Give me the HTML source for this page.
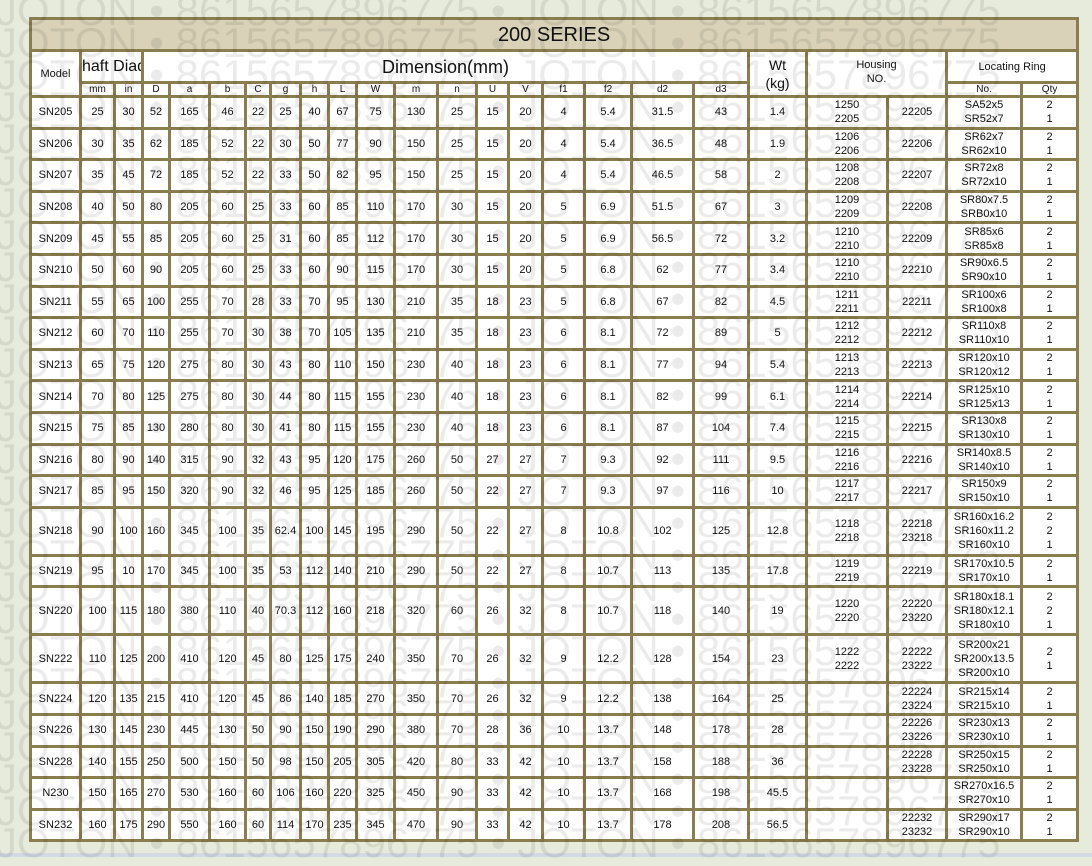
<!DOCTYPE html>
<html><head><meta charset="utf-8"><style>
html,body{margin:0;padding:0;}
body{width:1092px;height:857px;background:#e7ebdb;position:relative;overflow:hidden;font-family:"Liberation Sans",sans-serif;}
.bot{position:absolute;left:0;top:853px;width:1092px;height:4px;background:#d3dae6;}
table{position:absolute;left:29px;top:17px;width:1049px;border-collapse:collapse;table-layout:fixed;background:#fff;}
td{border:3px solid #8a7d4e;text-align:center;font-size:11px;color:#111;padding:0;line-height:14px;overflow:hidden;white-space:nowrap;}
td.t{background:#d9d2b9;font-size:20px;color:#111;height:29px;line-height:20px;}
.h1 td{height:29px;}
.big{font-size:18px;}
.sm{font-size:10px;line-height:11px;}
.r td{height:28.6px;}
.r3 td{height:45px;}
.wm{position:absolute;left:0;top:0;width:1092px;height:857px;pointer-events:none;z-index:5;}
.wm div{position:absolute;left:-4px;white-space:nowrap;font-size:42px;color:rgba(0,0,0,0.08);letter-spacing:0px;line-height:42px;}
</style></head><body>
<table>
<colgroup>
<col style="width:50px"><col style="width:34px"><col style="width:28px"><col style="width:27px"><col style="width:40px"><col style="width:36px"><col style="width:25px"><col style="width:30px"><col style="width:28px"><col style="width:28px"><col style="width:38px"><col style="width:43px"><col style="width:39px"><col style="width:32px"><col style="width:34px"><col style="width:42px"><col style="width:47px"><col style="width:62px"><col style="width:55px"><col style="width:58px"><col style="width:81px"><col style="width:59px"><col style="width:75px"><col style="width:56px">
</colgroup>
<tr><td class="t" colspan="24">200 SERIES</td></tr>
<tr class="h1"><td rowspan="2" style="font-size:11px">Model</td><td colspan="2" style="text-align:left;font-size:16px;line-height:18px">&#8203;haft Diad</td><td colspan="16" class="big">Dimension(mm)</td><td rowspan="2" style="font-size:14px;line-height:18px">Wt<br>(kg)</td><td colspan="2" rowspan="2" style="vertical-align:top;padding-top:6px;font-size:11px">Housing<br>NO.</td><td colspan="2" style="font-size:11px">Locating Ring</td></tr>
<tr style="height:12px"><td class="sm">mm</td><td class="sm">in</td><td class="sm">D</td><td class="sm">a</td><td class="sm">b</td><td class="sm">C</td><td class="sm">g</td><td class="sm">h</td><td class="sm">L</td><td class="sm">W</td><td class="sm">m</td><td class="sm">n</td><td class="sm">U</td><td class="sm">V</td><td class="sm">f1</td><td class="sm">f2</td><td class="sm">d2</td><td class="sm">d3</td><td class="sm">No.</td><td class="sm">Qty</td></tr>
<tr class="r"><td>SN205</td><td>25</td><td>30</td><td>52</td><td>165</td><td>46</td><td>22</td><td>25</td><td>40</td><td>67</td><td>75</td><td>130</td><td>25</td><td>15</td><td>20</td><td>4</td><td>5.4</td><td>31.5</td><td>43</td><td>1.4</td><td>1250<br>2205</td><td>22205</td><td>SA52x5<br>SR52x7</td><td>2<br>1</td></tr>
<tr class="r"><td>SN206</td><td>30</td><td>35</td><td>62</td><td>185</td><td>52</td><td>22</td><td>30</td><td>50</td><td>77</td><td>90</td><td>150</td><td>25</td><td>15</td><td>20</td><td>4</td><td>5.4</td><td>36.5</td><td>48</td><td>1.9</td><td>1206<br>2206</td><td>22206</td><td>SR62x7<br>SR62x10</td><td>2<br>1</td></tr>
<tr class="r"><td>SN207</td><td>35</td><td>45</td><td>72</td><td>185</td><td>52</td><td>22</td><td>33</td><td>50</td><td>82</td><td>95</td><td>150</td><td>25</td><td>15</td><td>20</td><td>4</td><td>5.4</td><td>46.5</td><td>58</td><td>2</td><td>1208<br>2208</td><td>22207</td><td>SR72x8<br>SR72x10</td><td>2<br>1</td></tr>
<tr class="r"><td>SN208</td><td>40</td><td>50</td><td>80</td><td>205</td><td>60</td><td>25</td><td>33</td><td>60</td><td>85</td><td>110</td><td>170</td><td>30</td><td>15</td><td>20</td><td>5</td><td>6.9</td><td>51.5</td><td>67</td><td>3</td><td>1209<br>2209</td><td>22208</td><td>SR80x7.5<br>SRB0x10</td><td>2<br>1</td></tr>
<tr class="r"><td>SN209</td><td>45</td><td>55</td><td>85</td><td>205</td><td>60</td><td>25</td><td>31</td><td>60</td><td>85</td><td>112</td><td>170</td><td>30</td><td>15</td><td>20</td><td>5</td><td>6.9</td><td>56.5</td><td>72</td><td>3.2</td><td>1210<br>2210</td><td>22209</td><td>SR85x6<br>SR85x8</td><td>2<br>1</td></tr>
<tr class="r"><td>SN210</td><td>50</td><td>60</td><td>90</td><td>205</td><td>60</td><td>25</td><td>33</td><td>60</td><td>90</td><td>115</td><td>170</td><td>30</td><td>15</td><td>20</td><td>5</td><td>6.8</td><td>62</td><td>77</td><td>3.4</td><td>1210<br>2210</td><td>22210</td><td>SR90x6.5<br>SR90x10</td><td>2<br>1</td></tr>
<tr class="r"><td>SN211</td><td>55</td><td>65</td><td>100</td><td>255</td><td>70</td><td>28</td><td>33</td><td>70</td><td>95</td><td>130</td><td>210</td><td>35</td><td>18</td><td>23</td><td>5</td><td>6.8</td><td>67</td><td>82</td><td>4.5</td><td>1211<br>2211</td><td>22211</td><td>SR100x6<br>SR100x8</td><td>2<br>1</td></tr>
<tr class="r"><td>SN212</td><td>60</td><td>70</td><td>110</td><td>255</td><td>70</td><td>30</td><td>38</td><td>70</td><td>105</td><td>135</td><td>210</td><td>35</td><td>18</td><td>23</td><td>6</td><td>8.1</td><td>72</td><td>89</td><td>5</td><td>1212<br>2212</td><td>22212</td><td>SR110x8<br>SR110x10</td><td>2<br>1</td></tr>
<tr class="r"><td>SN213</td><td>65</td><td>75</td><td>120</td><td>275</td><td>80</td><td>30</td><td>43</td><td>80</td><td>110</td><td>150</td><td>230</td><td>40</td><td>18</td><td>23</td><td>6</td><td>8.1</td><td>77</td><td>94</td><td>5.4</td><td>1213<br>2213</td><td>22213</td><td>SR120x10<br>SR120x12</td><td>2<br>1</td></tr>
<tr class="r"><td>SN214</td><td>70</td><td>80</td><td>125</td><td>275</td><td>80</td><td>30</td><td>44</td><td>80</td><td>115</td><td>155</td><td>230</td><td>40</td><td>18</td><td>23</td><td>6</td><td>8.1</td><td>82</td><td>99</td><td>6.1</td><td>1214<br>2214</td><td>22214</td><td>SR125x10<br>SR125x13</td><td>2<br>1</td></tr>
<tr class="r"><td>SN215</td><td>75</td><td>85</td><td>130</td><td>280</td><td>80</td><td>30</td><td>41</td><td>80</td><td>115</td><td>155</td><td>230</td><td>40</td><td>18</td><td>23</td><td>6</td><td>8.1</td><td>87</td><td>104</td><td>7.4</td><td>1215<br>2215</td><td>22215</td><td>SR130x8<br>SR130x10</td><td>2<br>1</td></tr>
<tr class="r"><td>SN216</td><td>80</td><td>90</td><td>140</td><td>315</td><td>90</td><td>32</td><td>43</td><td>95</td><td>120</td><td>175</td><td>260</td><td>50</td><td>27</td><td>27</td><td>7</td><td>9.3</td><td>92</td><td>111</td><td>9.5</td><td>1216<br>2216</td><td>22216</td><td>SR140x8.5<br>SR140x10</td><td>2<br>1</td></tr>
<tr class="r"><td>SN217</td><td>85</td><td>95</td><td>150</td><td>320</td><td>90</td><td>32</td><td>46</td><td>95</td><td>125</td><td>185</td><td>260</td><td>50</td><td>22</td><td>27</td><td>7</td><td>9.3</td><td>97</td><td>116</td><td>10</td><td>1217<br>2217</td><td>22217</td><td>SR150x9<br>SR150x10</td><td>2<br>1</td></tr>
<tr class="r3"><td>SN218</td><td>90</td><td>100</td><td>160</td><td>345</td><td>100</td><td>35</td><td>62.4</td><td>100</td><td>145</td><td>195</td><td>290</td><td>50</td><td>22</td><td>27</td><td>8</td><td>10.8</td><td>102</td><td>125</td><td>12.8</td><td>1218<br>2218</td><td>22218<br>23218</td><td>SR160x16.2<br>SR160x11.2<br>SR160x10</td><td>2<br>2<br>1</td></tr>
<tr class="r"><td>SN219</td><td>95</td><td>10</td><td>170</td><td>345</td><td>100</td><td>35</td><td>53</td><td>112</td><td>140</td><td>210</td><td>290</td><td>50</td><td>22</td><td>27</td><td>8</td><td>10.7</td><td>113</td><td>135</td><td>17.8</td><td>1219<br>2219</td><td>22219</td><td>SR170x10.5<br>SR170x10</td><td>2<br>1</td></tr>
<tr class="r3"><td>SN220</td><td>100</td><td>115</td><td>180</td><td>380</td><td>110</td><td>40</td><td>70.3</td><td>112</td><td>160</td><td>218</td><td>320</td><td>60</td><td>26</td><td>32</td><td>8</td><td>10.7</td><td>118</td><td>140</td><td>19</td><td>1220<br>2220</td><td>22220<br>23220</td><td>SR180x18.1<br>SR180x12.1<br>SR180x10</td><td>2<br>2<br>1</td></tr>
<tr class="r3"><td>SN222</td><td>110</td><td>125</td><td>200</td><td>410</td><td>120</td><td>45</td><td>80</td><td>125</td><td>175</td><td>240</td><td>350</td><td>70</td><td>26</td><td>32</td><td>9</td><td>12.2</td><td>128</td><td>154</td><td>23</td><td>1222<br>2222</td><td>22222<br>23222</td><td>SR200x21<br>SR200x13.5<br>SR200x10</td><td>2<br>1</td></tr>
<tr class="r"><td>SN224</td><td>120</td><td>135</td><td>215</td><td>410</td><td>120</td><td>45</td><td>86</td><td>140</td><td>185</td><td>270</td><td>350</td><td>70</td><td>26</td><td>32</td><td>9</td><td>12.2</td><td>138</td><td>164</td><td>25</td><td></td><td>22224<br>23224</td><td>SR215x14<br>SR215x10</td><td>2<br>1</td></tr>
<tr class="r"><td>SN226</td><td>130</td><td>145</td><td>230</td><td>445</td><td>130</td><td>50</td><td>90</td><td>150</td><td>190</td><td>290</td><td>380</td><td>70</td><td>28</td><td>36</td><td>10</td><td>13.7</td><td>148</td><td>178</td><td>28</td><td></td><td>22226<br>23226</td><td>SR230x13<br>SR230x10</td><td>2<br>1</td></tr>
<tr class="r"><td>SN228</td><td>140</td><td>155</td><td>250</td><td>500</td><td>150</td><td>50</td><td>98</td><td>150</td><td>205</td><td>305</td><td>420</td><td>80</td><td>33</td><td>42</td><td>10</td><td>13.7</td><td>158</td><td>188</td><td>36</td><td></td><td>22228<br>23228</td><td>SR250x15<br>SR250x10</td><td>2<br>1</td></tr>
<tr class="r"><td>N230</td><td>150</td><td>165</td><td>270</td><td>530</td><td>160</td><td>60</td><td>106</td><td>160</td><td>220</td><td>325</td><td>450</td><td>90</td><td>33</td><td>42</td><td>10</td><td>13.7</td><td>168</td><td>198</td><td>45.5</td><td></td><td></td><td>SR270x16.5<br>SR270x10</td><td>2<br>1</td></tr>
<tr class="r"><td>SN232</td><td>160</td><td>175</td><td>290</td><td>550</td><td>160</td><td>60</td><td>114</td><td>170</td><td>235</td><td>345</td><td>470</td><td>90</td><td>33</td><td>42</td><td>10</td><td>13.7</td><td>178</td><td>208</td><td>56.5</td><td></td><td>22232<br>23232</td><td>SR290x17<br>SR290x10</td><td>2<br>1</td></tr>
</table>
<div class="wm">
<div style="top:-10px">JOTON • 8615657896775 • JOTON • 8615657896775</div>
<div style="top:22px">JOTON • 8615657896775 • JOTON • 8615657896775</div>
<div style="top:54px">JOTON • 8615657896775 • JOTON • 8615657896775</div>
<div style="top:86px">JOTON • 8615657896775 • JOTON • 8615657896775</div>
<div style="top:118px">JOTON • 8615657896775 • JOTON • 8615657896775</div>
<div style="top:150px">JOTON • 8615657896775 • JOTON • 8615657896775</div>
<div style="top:182px">JOTON • 8615657896775 • JOTON • 8615657896775</div>
<div style="top:214px">JOTON • 8615657896775 • JOTON • 8615657896775</div>
<div style="top:246px">JOTON • 8615657896775 • JOTON • 8615657896775</div>
<div style="top:278px">JOTON • 8615657896775 • JOTON • 8615657896775</div>
<div style="top:310px">JOTON • 8615657896775 • JOTON • 8615657896775</div>
<div style="top:342px">JOTON • 8615657896775 • JOTON • 8615657896775</div>
<div style="top:374px">JOTON • 8615657896775 • JOTON • 8615657896775</div>
<div style="top:406px">JOTON • 8615657896775 • JOTON • 8615657896775</div>
<div style="top:438px">JOTON • 8615657896775 • JOTON • 8615657896775</div>
<div style="top:470px">JOTON • 8615657896775 • JOTON • 8615657896775</div>
<div style="top:502px">JOTON • 8615657896775 • JOTON • 8615657896775</div>
<div style="top:534px">JOTON • 8615657896775 • JOTON • 8615657896775</div>
<div style="top:566px">JOTON • 8615657896775 • JOTON • 8615657896775</div>
<div style="top:598px">JOTON • 8615657896775 • JOTON • 8615657896775</div>
<div style="top:630px">JOTON • 8615657896775 • JOTON • 8615657896775</div>
<div style="top:662px">JOTON • 8615657896775 • JOTON • 8615657896775</div>
<div style="top:694px">JOTON • 8615657896775 • JOTON • 8615657896775</div>
<div style="top:726px">JOTON • 8615657896775 • JOTON • 8615657896775</div>
<div style="top:758px">JOTON • 8615657896775 • JOTON • 8615657896775</div>
<div style="top:790px">JOTON • 8615657896775 • JOTON • 8615657896775</div>
<div style="top:822px">JOTON • 8615657896775 • JOTON • 8615657896775</div>
</div>
<div class="bot"></div>
</body></html>
